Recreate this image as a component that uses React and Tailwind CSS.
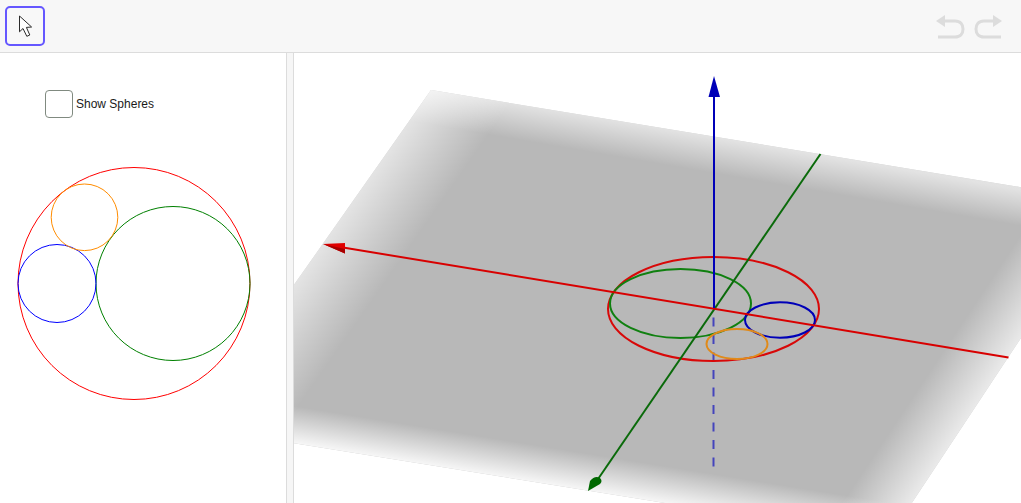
import { Fragment } from 'react'

const Toolbar = () => (
    <div className="h-[53px] shrink-0 bg-[#f7f7f7] border-b border-[#dcdcdc] pl-[5px] pr-[18px] flex items-start justify-between">
        <button className="mt-[6px] size-10 rounded-[5px] border-2 border-[#6557ff] bg-white/10 flex items-center justify-center">
            <svg width="20" height="24" viewBox="0 0 20 24" fill="none">
                <path d="M4.5 2 L4.5 17.800 L8 14.500 L11.800 22.300 L14.800 21 L11.400 13.400 L16.600 13 Z" fill="#fff" stroke="#2b2b2b" strokeWidth="1" strokeLinejoin="miter" />
            </svg>
        </button>
        <div className="mt-[14px] flex gap-[9px]">
            <svg width="29" height="25" viewBox="0 0 29 25" fill="none">
                <path d="M0 7 L9 1 L9 13 Z" fill="#dcdcdc" />
                <path d="M8 7 H19 C24.5 7 27 10.500 27 15 C27 19.500 24.500 23 19 23 H2" stroke="#dcdcdc" strokeWidth="3" />
            </svg>
            <svg width="29" height="25" viewBox="0 0 29 25" fill="none">
                <path d="M28 7 L19 1 L19 13 Z" fill="#dcdcdc" />
                <path d="M20 7 H10 C4.500 7 2 10.500 2 15 C2 19.500 4.500 23 10 23 H27" stroke="#dcdcdc" strokeWidth="3" />
            </svg>
        </div>
    </div>
)

const circles = [
    { cx: 134, cy: 283.5, r: 116, color: '#ff0000' },
    { cx: 173, cy: 283.5, r: 77, color: '#008000' },
    { cx: 57, cy: 283.5, r: 39, color: '#0000ff' },
    { cx: 84.5, cy: 217.3, r: 33.3, color: '#ff8c00' },
]

const LeftPanel = () => (
    <div className="relative w-[286px] shrink-0 bg-white pl-[45px] pt-[37px]">
        <label className="flex items-center gap-[3px]">
            <span className="size-[28px] rounded-[4px] border-[1.5px] border-[#808a80] bg-white" />
            <span className="text-[12px] text-[#1a1a1a] font-['Liberation_Sans',sans-serif]">Show Spheres</span>
        </label>
        {/* drawing pad, coordinates are page - 53 */}
        <svg className="absolute left-0 top-0" width="286" height="450" viewBox="0 53 286 450" fill="none">
            {circles.map(c => (
                <circle key={c.color} cx={c.cx} cy={c.cy} r={c.r} stroke={c.color} strokeWidth="1" />
            ))}
        </svg>
    </div>
)

const Divider = () => (
    <div className="w-[8px] shrink-0 bg-[#f6f6f6] border-x border-[#dcdcdc]" />
)

const PLANE = '431,90 1111,202 888,539 194,427'

const fades = [
    // id, from, to: pale at the edge fading to nothing inside
    { id: 'fadeTop', x1: 660, y1: 128, x2: 654, y2: 163, a: 0.6 },
    { id: 'fadeBottom', x1: 560, y1: 487, x2: 566, y2: 450, a: 0.9 },
    { id: 'fadeLeft', x1: 294, y1: 285, x2: 354, y2: 327, a: 0.62 },
    { id: 'fadeRight', x1: 1008, y1: 358, x2: 960, y2: 326, a: 0.7 },
]

const View3D = () => (
    <div className="flex-1 min-w-0 bg-white">
        <svg className="block" width="727" height="450" viewBox="294 53 727 450" fill="none">
            <defs>
                {fades.map(f => (
                    <linearGradient key={f.id} id={f.id} gradientUnits="userSpaceOnUse" x1={f.x1} y1={f.y1} x2={f.x2} y2={f.y2}>
                        <stop offset="0" stopColor="#fff" stopOpacity={f.a} />
                        <stop offset="1" stopColor="#fff" stopOpacity="0" />
                    </linearGradient>
                ))}
            </defs>

            <polygon points={PLANE} fill="#b8b8b8" />
            {fades.map(f => (
                <Fragment key={f.id}>
                    <polygon points={PLANE} fill={`url(#${f.id})`} />
                </Fragment>
            ))}

            {/* z axis below the plane */}
            <line x1="713.500" y1="317.500" x2="713.500" y2="467" stroke="#4444bc" strokeWidth="2" strokeDasharray="9 8.500" />

            <ellipse cx="713.500" cy="309" rx="105.500" ry="52" stroke="#d80808" strokeWidth="2" />
            <ellipse cx="680.500" cy="303.500" rx="70.500" ry="34.500" stroke="#108010" strokeWidth="2" />
            <ellipse cx="780" cy="320" rx="35" ry="17.700" stroke="#0000b8" strokeWidth="2" />
            <ellipse cx="737" cy="344" rx="30.500" ry="15" stroke="#e08a1a" strokeWidth="2" />

            {/* y axis */}
            <line x1="820.500" y1="154" x2="596" y2="482" stroke="#0a6a0a" strokeWidth="2" />
            <path d="M588 491 L590 481 Q595 475 600 478 Q603 481 600 484 Z" fill="#006800" />

            {/* x axis */}
            <line x1="340" y1="247" x2="1008.500" y2="357.500" stroke="#d80000" strokeWidth="2" />
            <path d="M323 244 L345 243 L345 253.500 Z" fill="#e00000" />
            <path d="M323 244 L345 249 L345 253.500 Z" fill="#a80000" />

            {/* z axis */}
            <line x1="714" y1="308" x2="714" y2="95" stroke="#0000b8" strokeWidth="2" />
            <path d="M714 76 L720 97 L708.500 97 Z" fill="#0000b8" />
        </svg>
    </div>
)

export default function App() {
    return (
        <div className="w-[1021px] h-[503px] flex flex-col overflow-hidden bg-white">
            <Toolbar />
            <div className="flex-1 min-h-0 flex">
                <LeftPanel />
                <Divider />
                <View3D />
            </div>
        </div>
    )
}
